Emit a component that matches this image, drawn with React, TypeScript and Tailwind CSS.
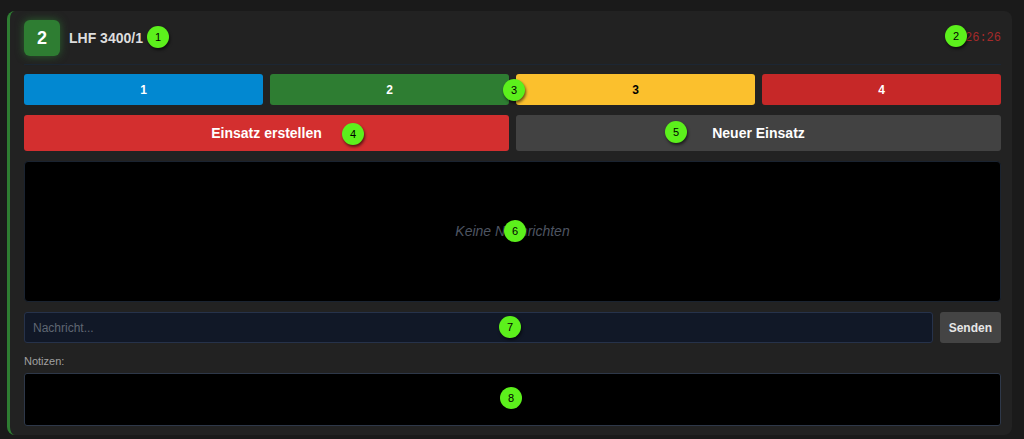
import React from 'react';

const markers = [
  { n: 1, x: 158, y: 37 },
  { n: 2, x: 956, y: 36 },
  { n: 3, x: 514, y: 90 },
  { n: 4, x: 353, y: 134 },
  { n: 5, x: 676, y: 132 },
  { n: 6, x: 515, y: 231 },
  { n: 7, x: 510, y: 327 },
  { n: 8, x: 511, y: 398 },
];

const statuses = [
  { label: '1', cls: 'bg-[#0288d1] text-white' },
  { label: '2', cls: 'bg-[#2e7d32] text-white' },
  { label: '3', cls: 'bg-[#fbc02d] text-black' },
  { label: '4', cls: 'bg-[#c62828] text-white' },
];

export default function App() {
  return (
    <div className="relative min-h-[439px] w-[1024px] overflow-hidden bg-[#1a1a1a] pl-[7px] pr-[12px] pt-[11px] font-['Liberation_Sans',Arial,sans-serif]">
      {/* Vehicle card */}
      <div className="flex h-[424px] flex-col rounded-lg border-l-[3px] border-[#2e7d32] bg-[#222222] pl-[14px] pr-[11px] pt-[9px]">
        {/* Header */}
        <div className="flex items-center justify-between border-b border-[#1c2633] pb-[8px]">
          <div className="flex items-center gap-[9px]">
            <div className="flex h-[36px] w-[36px] items-center justify-center rounded-md bg-[#2e7d32] text-[18px] font-bold text-white shadow-[0_0_8px_rgba(46,125,50,0.7)]">
              2
            </div>
            <span className="text-[14px] font-bold text-[#dddddd]">LHF 3400/1</span>
          </div>
          <span className="font-['Liberation_Mono',monospace] text-[12px] text-[#a52a2a]">26:26</span>
        </div>

        {/* Status buttons */}
        <div className="mt-[9px] grid grid-cols-4 gap-[7px]">
          {statuses.map((s) => (
            <button
              key={s.label}
              className={`h-[31px] rounded-[3px] text-[12px] font-bold ${s.cls}`}
            >
              {s.label}
            </button>
          ))}
        </div>

        {/* Action buttons */}
        <div className="mt-[10px] grid grid-cols-2 gap-[7px]">
          <button className="h-[36px] rounded-[3px] bg-[#d32f2f] text-[14px] font-bold text-white">
            Einsatz erstellen
          </button>
          <button className="h-[36px] rounded-[3px] bg-[#424242] text-[14px] font-bold text-white">
            Neuer Einsatz
          </button>
        </div>

        {/* Messages */}
        <div className="mt-[10px] flex h-[141px] items-center justify-center rounded-[4px] border border-[#1a2330] bg-black">
          <span className="text-[14px] italic text-[#4e5562]">Keine Nachrichten</span>
        </div>

        {/* Message input */}
        <div className="mt-[10px] flex gap-[7px]">
          <input
            placeholder="Nachricht..."
            className="h-[31px] flex-1 rounded-[3px] border border-[#26324a] bg-[#111827] px-[8px] text-[12px] text-white outline-none placeholder:text-[#5f6672]"
          />
          <button className="h-[31px] rounded-[3px] bg-[#444444] px-[9px] text-[12px] font-bold text-[#e6e6e6]">
            Senden
          </button>
        </div>

        {/* Notes */}
        <label className="mt-[10px] text-[11px] text-[#a0a0a0]">Notizen:</label>
        <textarea className="mt-[3px] h-[53px] resize-none rounded-[3px] border border-[#2e3849] bg-black text-[12px] text-white outline-none" />
      </div>

      {/* Annotation markers */}
      {markers.map((m) => (
        <div
          key={m.n}
          className="absolute flex h-[22px] w-[22px] items-center justify-center rounded-full bg-[#5cf01c] text-[11px] text-black shadow-[1px_2px_3px_rgba(0,0,0,0.6)]"
          style={{ left: m.x - 11, top: m.y - 11 }}
        >
          {m.n}
        </div>
      ))}
    </div>
  );
}
